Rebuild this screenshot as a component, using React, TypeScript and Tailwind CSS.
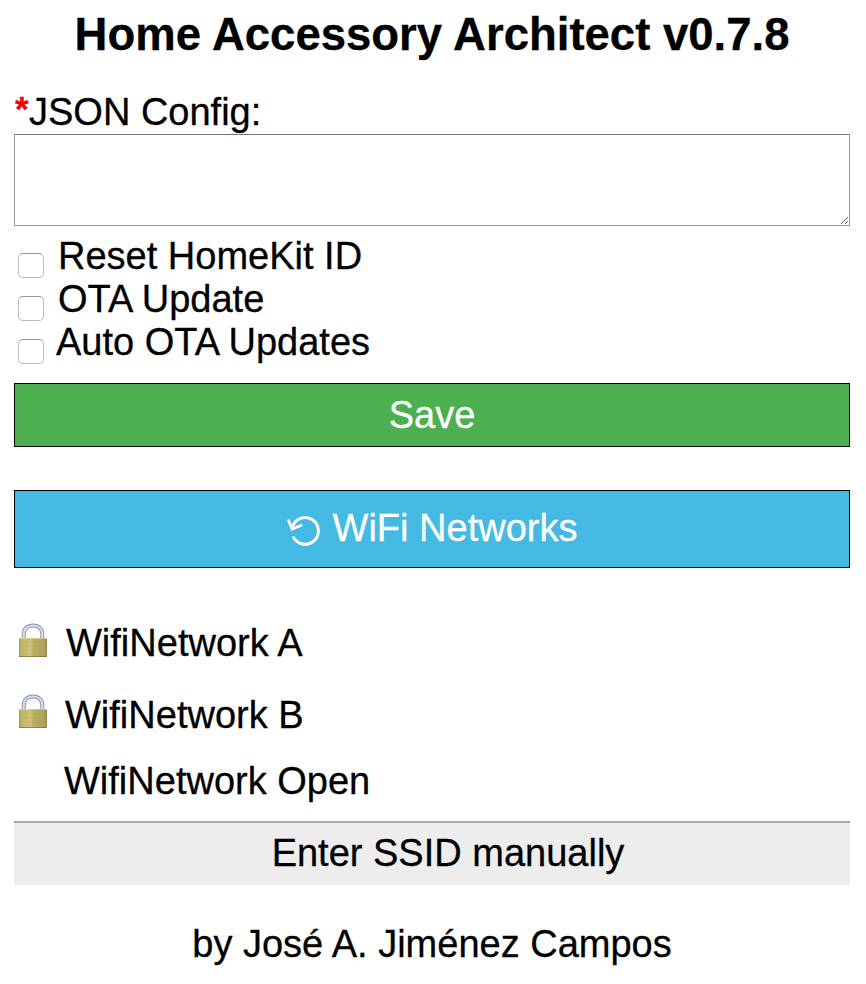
import React from "react";

function Lock({ id }: { id: string }) {
  return (
    <svg className="shrink-0" width="28" height="36" viewBox="0 0 28 36" fill="none">
      <defs>
        <linearGradient id={id} x1="0" x2="1" y1="0" y2="0">
          <stop offset="0" stopColor="#a99a4c" />
          <stop offset="0.08" stopColor="#c0b564" />
          <stop offset="0.42" stopColor="#cdc37a" />
          <stop offset="0.5" stopColor="#bcb062" />
          <stop offset="0.92" stopColor="#ada05a" />
          <stop offset="1" stopColor="#938443" />
        </linearGradient>
      </defs>
      <path d="M4.700 18V12.500C4.700 6.500 8.500 3.500 14 3.500S23.300 6.500 23.300 12.500V18" stroke="#8795ac" strokeWidth="4" />
      <path d="M4.700 18V12.500C4.700 6.500 8.500 3.500 14 3.500S23.300 6.500 23.300 12.500V18" stroke="#d3deed" strokeWidth="2.200" />
      <rect x="0" y="16" width="28" height="19" rx="0.800" fill={`url(#${id})`} />
      <path d="M0 16.500h28" stroke="#ddd6a0" strokeOpacity=".7" />
      <path d="M1 20.500h26M1 24.500h26M1 28.500h26" stroke="#8f833f" strokeOpacity=".12" />
      <path d="M0 34.500h28" stroke="#7b6f3a" strokeOpacity=".7" />
    </svg>
  );
}

function Reload() {
  return (
    <svg className="mt-px shrink-0" width="34" height="34" viewBox="0 0 34 34" fill="none" stroke="white">
      <path d="M5.400 15A13.300 13.300 0 1 1 6 24.500" strokeWidth="3" />
      <path d="M1.200 7.500L5 17.300L15.300 12.800" strokeWidth="2.600" />
    </svg>
  );
}

const options = [
  { label: "Reset HomeKit ID", pad: "pl-[14px]" },
  { label: "OTA Update", pad: "pl-[14px]" },
  { label: "Auto OTA Updates", pad: "pl-[12px]" },
];

export default function App() {
  return (
    <main className="h-[984px] w-[866px] overflow-hidden bg-white pl-[14px] pr-4 font-['Liberation_Sans',Arial,sans-serif] text-[38px] leading-[43px] text-black [-webkit-text-stroke:0.3px_currentColor]">
      <h1 className="pt-[10px] text-center text-[45.500px] font-bold leading-[50px]">Home Accessory Architect v0.7.8</h1>
      <div className="mt-[31px] flex h-[43px]">
        <span className="-mt-[4px] w-[15px] pl-px text-[35px] font-bold text-[#f00000]">*</span>
        <span>JSON Config:</span>
      </div>
      <textarea className="block h-[92px] w-full resize border border-[#949494] border-t-[#767676]" />
      <div className="pt-[9px]">
        {options.map((o) => (
          <label key={o.label} className="flex h-[43px]">
            <span className="ml-[4px] mt-[18px] h-[25px] w-[26px] shrink-0 rounded-[5px] border border-[#b8b8b8] border-t-[#999] bg-white" />
            <span className={o.pad}>{o.label}</span>
          </label>
        ))}
      </div>
      <button className="mt-[19px] block h-[64px] w-full border border-black bg-[#4caf50] text-white">Save</button>
      <button className="mt-[43px] flex h-[78px] w-full items-center justify-center gap-[12px] border border-black bg-[#44b9e3] pb-[2px] text-white">
        <Reload />
        <span>WiFi Networks</span>
      </button>
      <div className="mt-[54px] flex h-[71px] pl-[5px]"><Lock id="brass-a" /><span className="pl-[19px]">WifiNetwork A</span></div>
      <div className="flex h-[66px] pl-[5px]"><Lock id="brass-b" /><span className="pl-[18px] pt-px">WifiNetwork B</span></div>
      <div className="h-[62px] pl-[50px] pt-px">WifiNetwork Open</div>
      <div className="h-[64px] border-t-2 border-[#a9a9a9] bg-[#ededed] pl-8 pt-[9px] text-center">Enter SSID manually</div>
      <footer className="pt-[38px] text-center">by José A. Jiménez Campos</footer>
    </main>
  );
}
